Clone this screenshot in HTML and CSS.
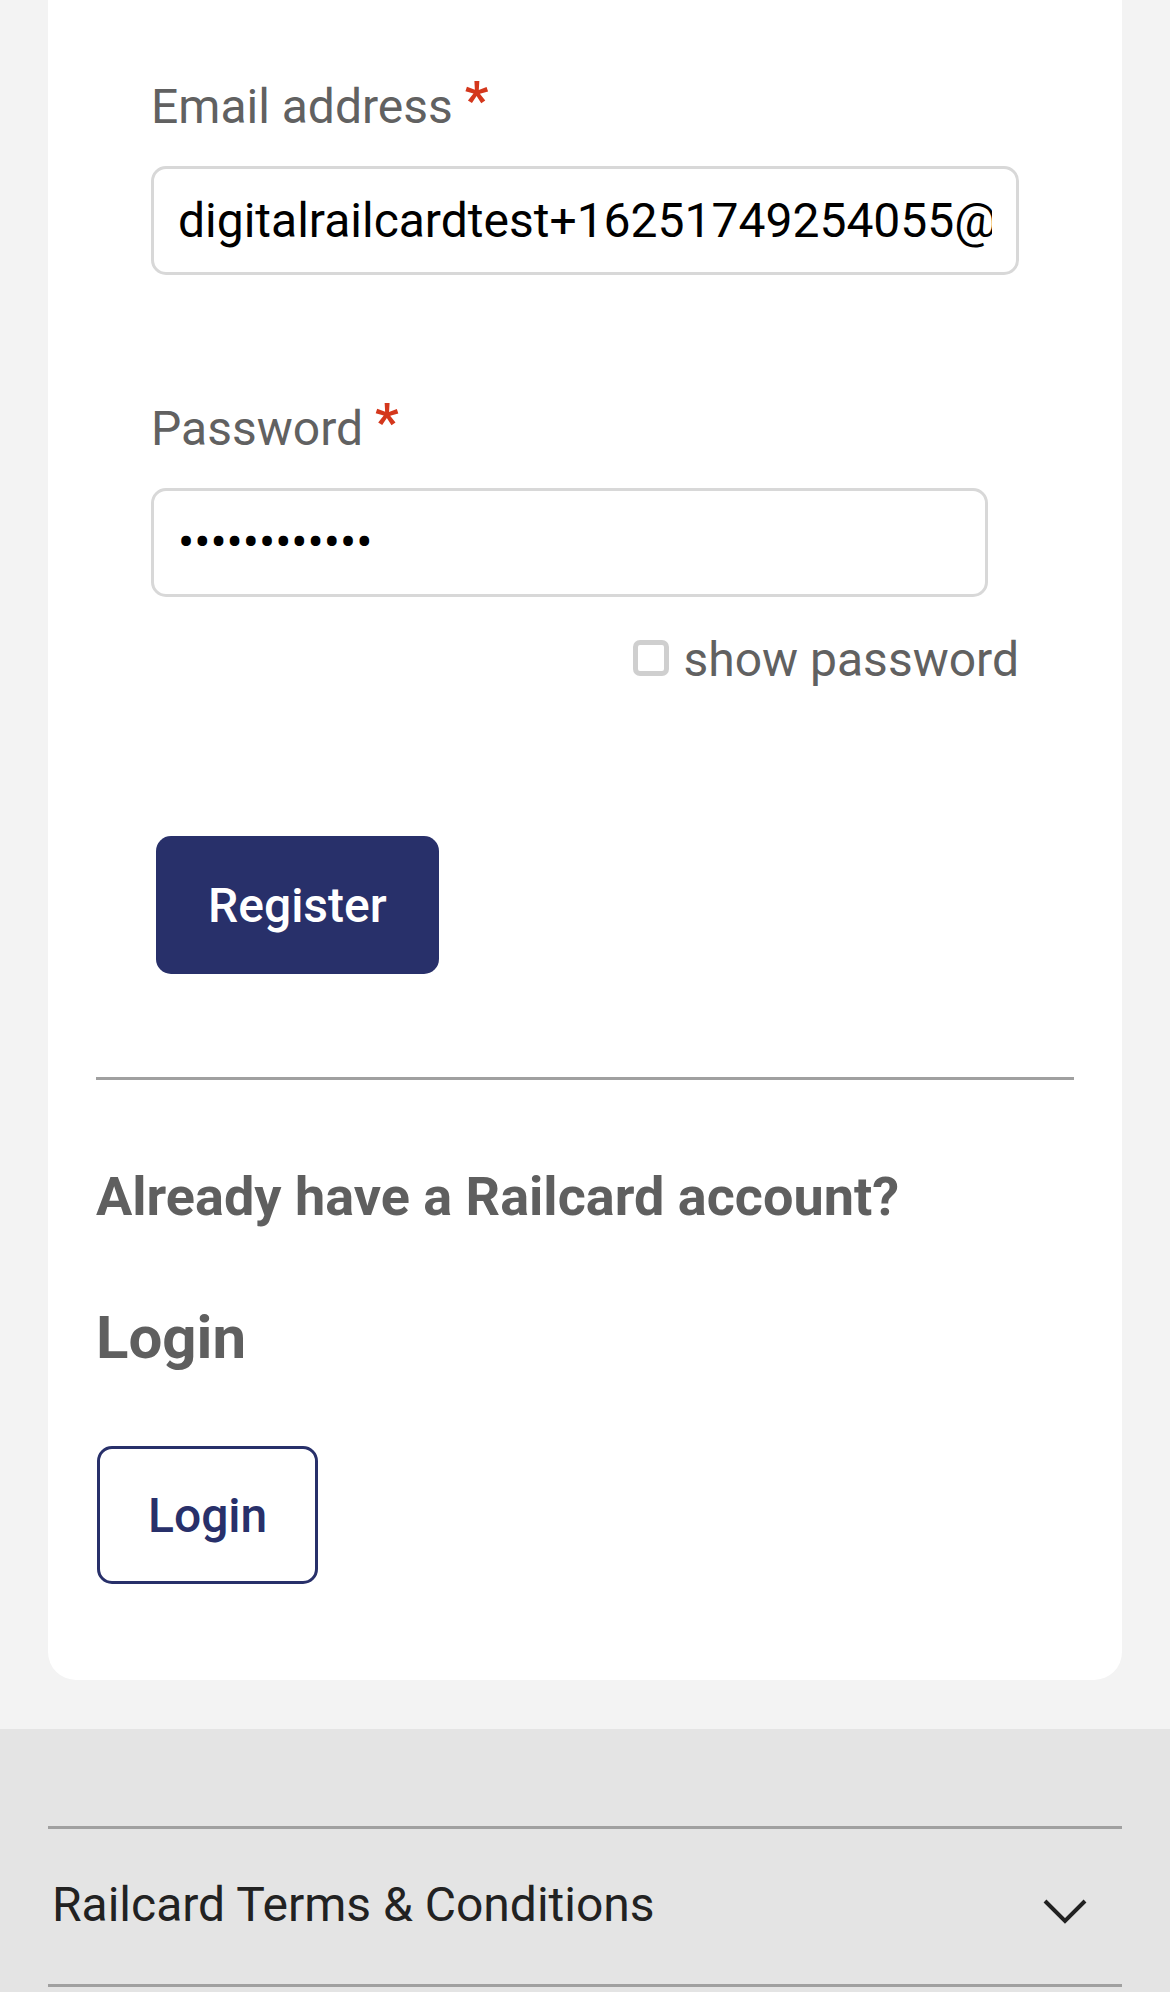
FILE: index.html
```html
<!DOCTYPE html>
<html lang="en">
<head>
<meta charset="utf-8">
<title>Register</title>
<link rel="stylesheet" href="styles.css">
</head>
<body>
<main class="page">
  <section class="card">
    <form class="form">
      <div class="field">
        <label class="label" for="email">Email address <span class="req">*</span></label>
        <input class="input" id="email" type="text" value="digitalrailcardtest+16251749254055@example.com">
      </div>
      <div class="field field-password">
        <label class="label" for="pw">Password <span class="req">*</span></label>
        <input class="input input-password" id="pw" type="password" value="abcdefghijkl">
      </div>
      <div class="show-row">
        <label class="show"><input class="check" type="checkbox">show password</label>
      </div>
      <button class="btn-primary" type="button">Register</button>
    </form>
    <hr class="divider">
    <h3 class="already">Already have a Railcard account?</h3>
    <h2 class="login-title">Login</h2>
    <a class="btn-outline" href="#">Login</a>
  </section>
</main>
<footer class="footer">
  <div class="accordion">
    <div class="acc-row">
      <span class="acc-title">Railcard Terms &amp; Conditions</span>
      <svg class="chevron" width="44" height="26" viewBox="0 0 44 26" aria-hidden="true">
        <path d="M2 2 L22 22 L42 2" fill="none" stroke="#222222" stroke-width="4"/>
      </svg>
    </div>
  </div>
</footer>
</body>
</html>
```

FILE: styles.css
```css
* { box-sizing: border-box; }

html, body {
  margin: 0;
  padding: 0;
}

body {
  background: #f3f3f3;
  font-family: Roboto, "Noto Sans", "Liberation Sans", sans-serif;
  color: #616161;
}

.page {
  padding: 0 48px;
}

.card {
  background: #ffffff;
  border-radius: 0 0 28px 28px;
  padding: 78px 48px 96px;
}

.form {
  padding: 0 55px 0 55px;
}

.field-password {
  margin-top: 125px;
}

.label {
  display: block;
  font-size: 48px;
  line-height: 58px;
  color: #616161;
}

.req {
  color: #d4371c;
  font-weight: 700;
  font-size: 52px;
  line-height: 0;
  vertical-align: 5px;
}

.input {
  display: block;
  width: 100%;
  height: 109px;
  margin-top: 30px;
  padding: 0 24px;
  border: 3px solid #d8d8d8;
  border-radius: 15px;
  background: #ffffff;
  font-family: Roboto, "Noto Sans", sans-serif;
  font-size: 48px;
  color: #000000;
  outline: none;
}

.input-password {
  width: 837px;
}

.show-row {
  margin-top: 34px;
  display: flex;
  justify-content: flex-end;
}

.show {
  font-size: 48px;
  line-height: 58px;
  color: #616161;
}

.check {
  -webkit-appearance: none;
  appearance: none;
  display: inline-block;
  width: 36px;
  height: 36px;
  margin: 0 14px 0 0;
  border: 5px solid #cfcfcf;
  border-radius: 7px;
  background: #ffffff;
  vertical-align: baseline;
}

.btn-primary {
  display: block;
  margin: 147px 0 0 5px;
  height: 138px;
  padding: 0 52px;
  border: none;
  border-radius: 15px;
  background: #28306a;
  color: #ffffff;
  font-family: Roboto, "Noto Sans", sans-serif;
  font-size: 48px;
  font-weight: 500;
}

.divider {
  margin: 103px 0 0;
  border: none;
  height: 3px;
  background: #a0a0a0;
}

.already {
  margin: 83px 0 0;
  font-size: 54px;
  line-height: 67px;
  font-weight: 700;
  color: #5f5f5f;
}

.login-title {
  margin: 72px 0 0;
  font-size: 60px;
  line-height: 72px;
  font-weight: 700;
  color: #5f5f5f;
}

.btn-outline {
  display: inline-flex;
  align-items: center;
  margin: 72px 0 0 1px;
  height: 138px;
  padding: 0 48px;
  border: 3px solid #28306a;
  border-radius: 15px;
  color: #28306a;
  font-size: 48px;
  font-weight: 500;
  text-decoration: none;
}

.footer {
  margin-top: 49px;
  background: #e4e4e4;
  padding: 97px 48px 40px;
}

.accordion {
  border-top: 3px solid #a0a0a0;
  border-bottom: 3px solid #a0a0a0;
}

.acc-row {
  display: flex;
  align-items: center;
  justify-content: space-between;
  height: 155px;
  padding: 0 35px 0 4px;
}

.acc-title {
  font-size: 48px;
  line-height: 58px;
  color: #222222;
  margin-top: -4px;
}

.chevron {
  display: block;
  margin-top: 10px;
}
```
